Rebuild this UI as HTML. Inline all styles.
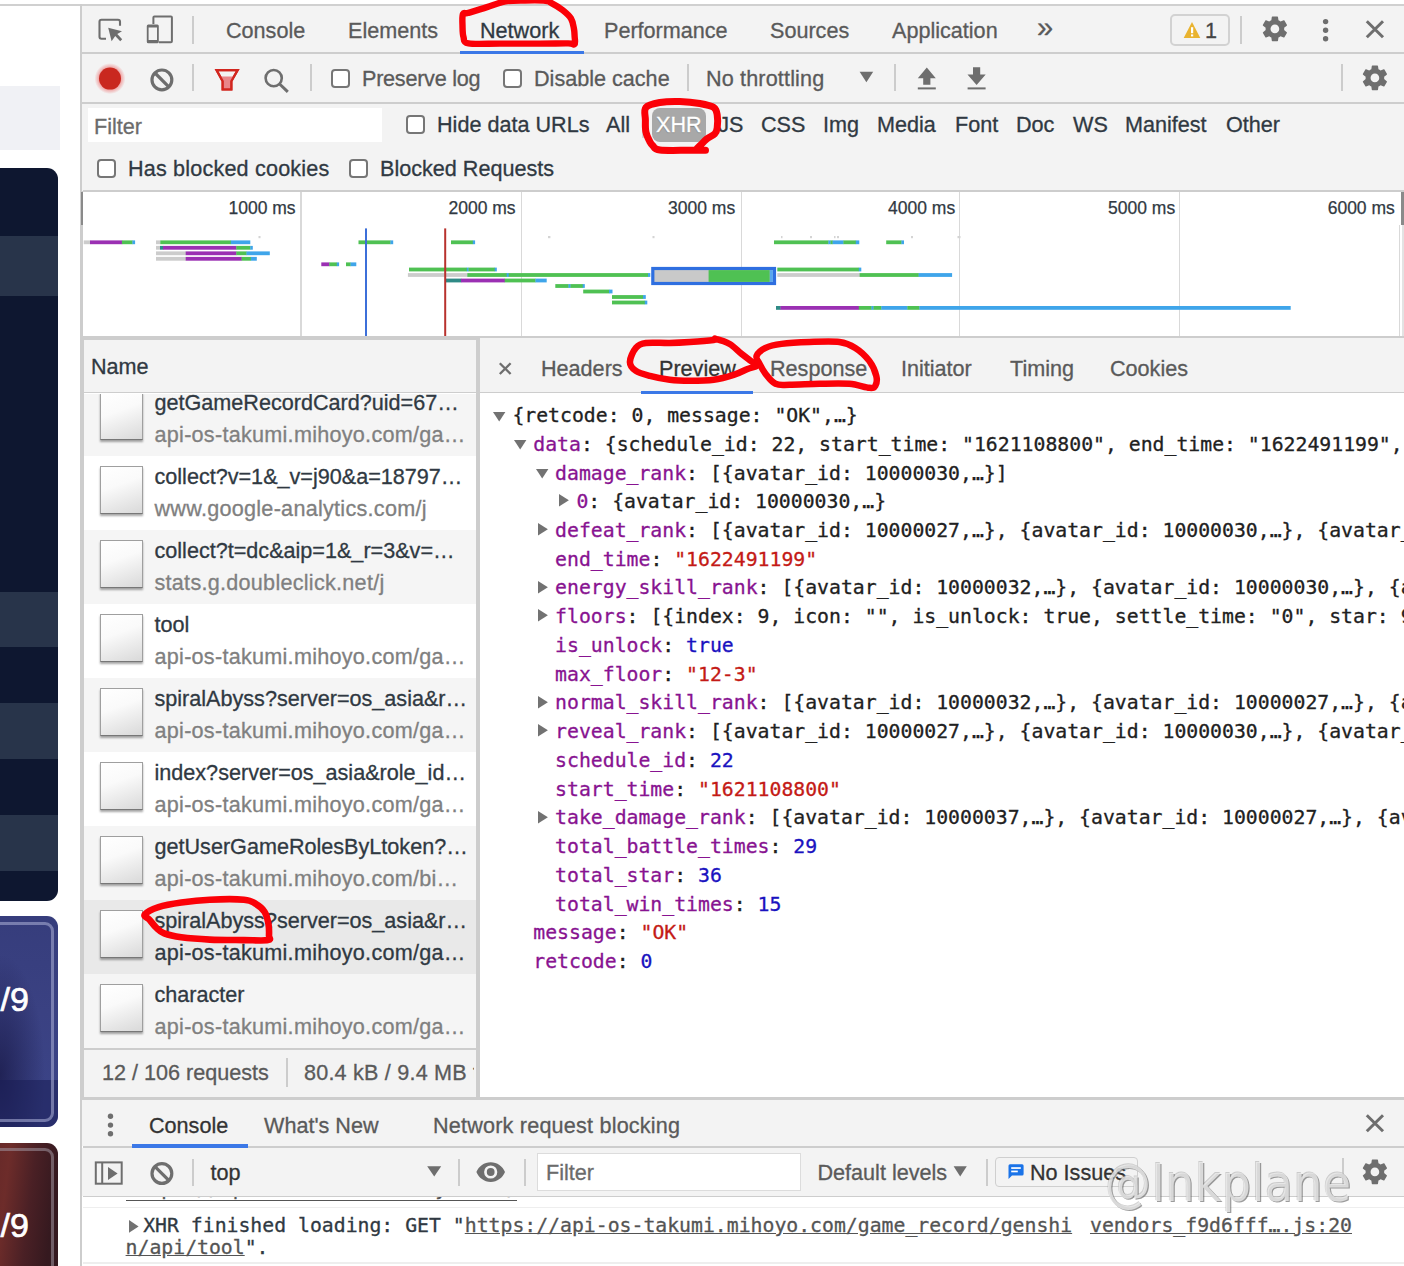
<!DOCTYPE html>
<html lang="en">
<head>
<meta charset="utf-8">
<title>DevTools - Network</title>
<style>
html,body{margin:0;padding:0;}
body{width:1404px;height:1266px;overflow:hidden;position:relative;background:#fff;
  font-family:"Liberation Sans",sans-serif;font-size:21.6px;color:#333;}
.abs{position:absolute;}
.t{position:absolute;white-space:nowrap;line-height:26px;-webkit-text-stroke:0.3px;}
.bar{position:absolute;background:#f3f3f3;}
.ln{position:absolute;background:#cdcdcd;}
.dv{position:absolute;width:2px;background:#ccc;}
.cb{position:absolute;width:15px;height:15px;border:2px solid #767676;border-radius:4px;background:#fff;}
.mono{font-family:"DejaVu Sans Mono","Liberation Mono",monospace;font-size:19.8px;}
svg{position:absolute;overflow:visible;}
.dark{color:#303942;}
.gray{color:#5a5a5a;}
/* tree */
.tr{position:absolute;white-space:pre;line-height:28px;height:28px;color:#212121;-webkit-text-stroke:0.3px;}
.k{color:#881391;}
.s{color:#c41a16;}
.n{color:#1a12c0;}
.ar{position:absolute;width:0;height:0;}
</style>
</head>
<body>

<!-- ============ LEFT PAGE STRIP ============ -->
<div id="page" class="abs" style="left:0;top:0;width:81px;height:1266px;background:#fff;overflow:hidden;">
  <div class="abs" style="left:0;top:86px;width:60px;height:63.5px;background:#f0f1f5;"></div>
  <div class="abs" style="left:-20px;top:168px;width:78px;height:733px;background:#0e1730;border-radius:11px;overflow:hidden;">
    <div class="abs" style="left:0;top:68px;width:100%;height:60px;background:#28344a;"></div>
    <div class="abs" style="left:0;top:424px;width:100%;height:55px;background:#28344a;"></div>
    <div class="abs" style="left:0;top:535px;width:100%;height:56px;background:#28344a;"></div>
    <div class="abs" style="left:0;top:647px;width:100%;height:56px;background:#28344a;"></div>
  </div>
  <div class="abs" style="left:-20px;top:916px;width:78px;height:211px;background:radial-gradient(ellipse 45px 120px at 20px 75%, rgba(24,24,70,.75), rgba(24,24,70,0) 100%),linear-gradient(180deg,#363d7c 0%,#3a4182 45%,#3b4488 100%);border-radius:11px;overflow:hidden;">
    <div class="abs" style="left:0;top:164px;width:100%;height:47px;background:rgba(25,30,85,.55);"></div>
    <div class="abs" style="left:-10px;top:5.5px;width:78px;height:194px;border:3.4px solid rgba(160,165,205,.62);border-radius:9px;"></div>
  </div>
  <div class="t" style="left:0.6px;top:981.6px;color:#fff;font-size:34px;line-height:34px;-webkit-text-stroke:0.7px;">/9</div>
  <div class="abs" style="left:-20px;top:1142.5px;width:78px;height:211px;background:linear-gradient(97deg,#5f2627 0%,#6d2c2a 30%,#4a2025 55%,#35191f 78%,#33191f 100%);border-radius:11px;overflow:hidden;">
    <div class="abs" style="left:-10px;top:5.5px;width:78px;height:194px;border:3.4px solid rgba(160,150,160,.55);border-radius:9px;"></div>
  </div>
  <div class="t" style="left:0.6px;top:1207.6px;color:#fff;font-size:34px;line-height:34px;-webkit-text-stroke:0.7px;">/9</div>
</div>

<!-- ============ DEVTOOLS FRAME ============ -->
<div class="ln" style="left:0;top:4px;width:1404px;height:2px;background:#d0d0d0;"></div>
<div class="ln" style="left:80.2px;top:4px;width:1.9px;height:1262px;background:#cdcdcd;"></div>
<div class="ln" style="left:82px;top:190px;width:1.2px;height:148px;background:#cdcdcd;"></div>
<div class="ln" style="left:80.4px;top:336px;width:3.6px;height:764px;background:#cdcdcd;"></div>

<!-- main tab bar -->
<div id="tb1" class="bar" style="left:82px;top:6px;width:1322px;height:46px;"></div>
<div class="ln" style="left:82px;top:52px;width:1322px;height:1.8px;"></div>
<!-- network toolbar -->
<div id="tb2" class="bar" style="left:82px;top:54px;width:1322px;height:48.2px;"></div>
<div class="ln" style="left:82px;top:102.2px;width:1322px;height:1.7px;"></div>
<!-- filter bar -->
<div id="tb3" class="bar" style="left:82px;top:103.9px;width:1322px;height:87px;"></div>

<!--TB1S-->
<!-- inspect icon -->
<svg style="left:84px;top:6px;" width="120" height="50" viewBox="84 6 120 50">
  <path d="M106 38.8 H101.5 Q99.5 38.8 99.5 36.8 V21.8 Q99.5 19.8 101.5 19.8 H118 Q120 19.8 120 21.8 V25.8" fill="none" stroke="#6e6e6e" stroke-width="2.1"/>
  <path d="M108.2 27.8 L122 31.2 L117.3 34.1 L122.2 39.2 L120.2 41.2 L115.2 36 L111.6 41.2 Z" fill="#6e6e6e"/>
  <!-- device icon -->
  <path d="M153.4 24 V17.4 Q153.4 16.4 154.4 16.4 H170.9 Q171.9 16.4 171.9 17.4 V41.2 Q171.9 42.2 170.9 42.2 H159" fill="none" stroke="#6e6e6e" stroke-width="2"/>
  <path d="M148.3 24.4 H157.3 Q158.8 24.4 158.8 25.9 V41.7 Q158.8 43.2 157.3 43.2 H148.3 Q146.8 43.2 146.8 41.7 V25.9 Q146.8 24.4 148.3 24.4 Z M148.6 27.6 V40 H157 V27.6 Z" fill="#6e6e6e" fill-rule="evenodd"/>
</svg>
<div class="dv" style="left:192px;top:16px;height:28px;"></div>
<div class="t gray" style="left:226px;top:18px;">Console</div>
<div class="t gray" style="left:348px;top:18px;">Elements</div>
<div class="t dark" style="left:480px;top:18px;">Network</div>
<div class="t gray" style="left:604px;top:18px;">Performance</div>
<div class="t gray" style="left:770px;top:18px;">Sources</div>
<div class="t gray" style="left:892px;top:18px;">Application</div>
<div class="t gray" style="left:1037px;top:13.5px;font-size:29px;">»</div>
<div class="abs" style="left:460px;top:50.6px;width:124px;height:3.2px;background:#3b78e7;"></div>
<!-- warning badge -->
<div class="abs" style="left:1170px;top:14px;width:56px;height:28px;border:2px solid #d2d2d2;border-radius:5px;"></div>
<svg style="left:1183px;top:21px;" width="18" height="18" viewBox="0 0 18 18"><path d="M9 1 L17.3 17 H0.7 Z" fill="#e9b32f"/><rect x="8" y="6.2" width="2.2" height="6" fill="#fff"/><rect x="8" y="13.4" width="2.2" height="2" fill="#fff"/></svg>
<div class="t" style="left:1205px;top:18px;color:#444;">1</div>
<div class="dv" style="left:1240px;top:16px;height:28px;"></div>
<svg style="left:1259.8px;top:14.3px;" width="29.8" height="29.8" viewBox="0 0 24 24"><path fill="#6e6e6e" d="M19.43 12.98c.04-.32.07-.64.07-.98s-.03-.66-.07-.98l2.11-1.65c.19-.15.24-.42.12-.64l-2-3.46c-.12-.22-.39-.3-.61-.22l-2.49 1c-.52-.4-1.08-.73-1.69-.98l-.38-2.65C14.46 2.18 14.25 2 14 2h-4c-.25 0-.46.18-.49.42l-.38 2.65c-.61.25-1.17.59-1.69.98l-2.49-1c-.23-.09-.49 0-.61.22l-2 3.46c-.13.22-.07.49.12.64l2.11 1.65c-.04.32-.07.65-.07.98s.03.66.07.98l-2.11 1.65c-.19.15-.24.42-.12.64l2 3.46c.12.22.39.3.61.22l2.49-1c.52.4 1.08.73 1.69.98l.38 2.65c.03.24.24.42.49.42h4c.25 0 .46-.18.49-.42l.38-2.65c.61-.25 1.17-.59 1.69-.98l2.49 1c.23.09.49 0 .61-.22l2-3.46c.12-.22.07-.49-.12-.64l-2.11-1.65zM12 15.5c-1.93 0-3.5-1.57-3.5-3.5s1.57-3.5 3.5-3.5 3.5 1.57 3.5 3.5-1.57 3.5-3.5 3.5z"/></svg>
<svg style="left:1320px;top:16px;" width="12" height="28" viewBox="0 0 12 28"><circle cx="5.6" cy="5.6" r="2.7" fill="#6e6e6e"/><circle cx="5.6" cy="14.3" r="2.7" fill="#6e6e6e"/><circle cx="5.6" cy="22.7" r="2.7" fill="#6e6e6e"/></svg>
<svg style="left:1364px;top:18px;" width="22" height="22" viewBox="1364 18 22 22"><path d="M1366.8 21.2 L1383 37.2 M1383 21.2 L1366.8 37.2" stroke="#6e6e6e" stroke-width="3" fill="none"/></svg>
<!--TB1E-->
<!--TB2S-->
<!-- record -->
<svg style="left:90px;top:58px;" width="40" height="40" viewBox="90 58 40 40"><defs><radialGradient id="rg" cx="50%" cy="50%" r="50%"><stop offset="70%" stop-color="#e88" stop-opacity="0.75"/><stop offset="100%" stop-color="#e88" stop-opacity="0"/></radialGradient></defs><circle cx="110" cy="78.6" r="15.5" fill="url(#rg)"/><circle cx="110" cy="78.6" r="11" fill="#c9281f"/></svg>
<!-- clear -->
<svg style="left:148px;top:65.9px;" width="28" height="28" viewBox="148 65 28 28"><circle cx="161.9" cy="78.9" r="9.9" fill="none" stroke="#6e6e6e" stroke-width="3.2"/><path d="M155 72 L168.8 85.8" stroke="#6e6e6e" stroke-width="3.2"/></svg>
<div class="dv" style="left:192px;top:64px;height:27px;"></div>
<!-- filter funnel -->
<svg style="left:212px;top:66px;" width="30" height="28" viewBox="212 66 30 28"><path d="M216.6 70.2 H237.6 L231.3 81.3 V89.3 H222.7 V81.3 Z" fill="none" stroke="#d2261f" stroke-width="2.3" stroke-linejoin="miter"/><path d="M220.2 76.4 H234 L231.3 81.3 V89.3 H222.7 V81.3 Z" fill="#e9868a"/><path d="M216.6 70.2 H237.6 L231.3 81.3 V89.3 H222.7 V81.3 Z" fill="none" stroke="#d2261f" stroke-width="2.3"/></svg>
<!-- search -->
<svg style="left:262px;top:65.9px;" width="30" height="30" viewBox="262 65 30 30"><circle cx="273.7" cy="77.1" r="8.1" fill="none" stroke="#6e6e6e" stroke-width="2.6"/><path d="M279.6 83 L287.8 90.8" stroke="#6e6e6e" stroke-width="3" /></svg>
<div class="dv" style="left:310px;top:64px;height:27px;"></div>
<div class="cb" style="left:331px;top:69px;"></div>
<div class="t gray" style="left:362px;top:65.9px;letter-spacing:-0.25px;">Preserve log</div>
<div class="cb" style="left:503px;top:69px;"></div>
<div class="t gray" style="left:534px;top:65.9px;">Disable cache</div>
<div class="dv" style="left:687px;top:64px;height:27px;"></div>
<div class="t gray" style="left:706px;top:65.9px;letter-spacing:0.15px;">No throttling</div>
<svg style="left:858px;top:70px;" width="16" height="14" viewBox="858 70 16 14"><path d="M859.6 71.8 H873.2 L866.4 82.2 Z" fill="#6e6e6e"/></svg>
<div class="dv" style="left:894px;top:64px;height:27px;"></div>
<!-- upload -->
<svg style="left:914px;top:64px;" width="26" height="28" viewBox="914 64 26 28"><path d="M926.8 67.6 L935.8 78.2 H930.4 V84.8 H923.2 V78.2 H917.8 Z" fill="#6e6e6e"/><rect x="917.8" y="87.4" width="18" height="2" fill="#6e6e6e"/></svg>
<!-- download -->
<svg style="left:964px;top:64px;" width="26" height="28" viewBox="964 64 26 28"><path d="M973 67.2 H980.2 V74.6 H985.7 L976.6 84.9 L967.5 74.6 H973 Z" fill="#6e6e6e"/><rect x="967.6" y="87.4" width="18" height="2" fill="#6e6e6e"/></svg>
<div class="dv" style="left:1341px;top:64px;height:27px;"></div>
<svg style="left:1359.8px;top:62.9px;" width="29.8" height="29.8" viewBox="0 0 24 24"><path fill="#6e6e6e" d="M19.43 12.98c.04-.32.07-.64.07-.98s-.03-.66-.07-.98l2.11-1.65c.19-.15.24-.42.12-.64l-2-3.46c-.12-.22-.39-.3-.61-.22l-2.49 1c-.52-.4-1.08-.73-1.69-.98l-.38-2.65C14.46 2.18 14.25 2 14 2h-4c-.25 0-.46.18-.49.42l-.38 2.65c-.61.25-1.17.59-1.69.98l-2.49-1c-.23-.09-.49 0-.61.22l-2 3.46c-.13.22-.07.49.12.64l2.11 1.65c-.04.32-.07.65-.07.98s.03.66.07.98l-2.11 1.65c-.19.15-.24.42-.12.64l2 3.46c.12.22.39.3.61.22l2.49-1c.52.4 1.08.73 1.69.98l.38 2.65c.03.24.24.42.49.42h4c.25 0 .46-.18.49-.42l.38-2.65c.61-.25 1.17-.59 1.69-.98l2.49 1c.23.09.49 0 .61-.22l2-3.46c.12-.22.07-.49-.12-.64l-2.11-1.65zM12 15.5c-1.93 0-3.5-1.57-3.5-3.5s1.57-3.5 3.5-3.5 3.5 1.57 3.5 3.5-1.57 3.5-3.5 3.5z"/></svg>
<!--TB2E-->
<!--TB3S-->
<div class="abs" style="left:88px;top:108px;width:294px;height:34px;background:#fff;"></div>
<div class="t" style="left:94px;top:114px;color:#6b6b6b;">Filter</div>
<div class="cb" style="left:406px;top:115px;"></div>
<div class="t dark" style="left:437px;top:112px;">Hide data URLs</div>
<div class="t dark" style="left:606px;top:112px;">All</div>
<div class="abs" style="left:642px;top:112px;width:2px;height:26px;background:#d6d6d6;"></div>
<div class="abs" style="left:652px;top:108px;width:54px;height:34px;background:#a8a8a8;border-radius:8px;"></div>
<div class="t" style="left:656px;top:112px;color:#fff;text-shadow:0 1px 1px rgba(0,0,0,.25);">XHR</div>
<div class="t dark" style="left:718.2px;top:112px;">JS</div>
<div class="t dark" style="left:761px;top:112px;">CSS</div>
<div class="t dark" style="left:823px;top:112px;">Img</div>
<div class="t dark" style="left:877px;top:112px;">Media</div>
<div class="t dark" style="left:955px;top:112px;">Font</div>
<div class="t dark" style="left:1016px;top:112px;">Doc</div>
<div class="t dark" style="left:1073px;top:112px;">WS</div>
<div class="t dark" style="left:1125px;top:112px;">Manifest</div>
<div class="t dark" style="left:1226px;top:112px;">Other</div>
<div class="cb" style="left:97px;top:158.5px;"></div>
<div class="t dark" style="left:128px;top:156px;letter-spacing:0.18px;">Has blocked cookies</div>
<div class="cb" style="left:349px;top:158.5px;"></div>
<div class="t dark" style="left:380px;top:156px;">Blocked Requests</div>
<!--TB3E-->
<!--OVS-->
<div class="abs" style="left:83px;top:190px;width:1321px;height:2px;background:#cdcdcd;"></div>
<div class="abs" style="left:83px;top:192px;width:1321px;height:144px;background:#fff;"></div>
<div class="abs" style="left:83px;top:336px;width:1321px;height:2.5px;background:#cdcdcd;"></div>
<svg style="left:0;top:0;" width="1404" height="346" viewBox="0 0 1404 346">
<g shape-rendering="crispEdges"><rect x="300" y="192" width="1.6" height="144" fill="#d9d9d9"/><rect x="520.6" y="192" width="1.6" height="144" fill="#d9d9d9"/><rect x="740.6" y="192" width="1.6" height="144" fill="#d9d9d9"/><rect x="958.6" y="192" width="1.6" height="144" fill="#d9d9d9"/><rect x="1178.6" y="192" width="1.6" height="144" fill="#d9d9d9"/>
<rect x="1398.6" y="225" width="1.6" height="111" fill="#d9d9d9"/>
<rect x="1402.4" y="225" width="1.6" height="111" fill="#e3e3e3"/>
<rect x="81" y="192" width="2.4" height="33" fill="#8a8a8a"/>
<rect x="1400.5" y="192" width="3.5" height="33" fill="#8a8a8a"/></g>
<rect x="258.5" y="236" width="2" height="2.2" fill="#d4d4d4"/><rect x="548" y="236" width="2.4" height="2.2" fill="#d4d4d4"/><rect x="652.5" y="236" width="2" height="2.2" fill="#d4d4d4"/><rect x="781" y="236" width="1.5" height="2.2" fill="#d4d4d4"/><rect x="810" y="236" width="2" height="2.2" fill="#d4d4d4"/><rect x="834" y="236" width="1.5" height="2.2" fill="#d4d4d4"/><rect x="837" y="236" width="2" height="2.2" fill="#d4d4d4"/><rect x="911" y="236" width="2" height="2.2" fill="#d4d4d4"/><rect x="957.5" y="236" width="3" height="2.2" fill="#d4d4d4"/>
<rect x="83.7" y="240.4" width="6.6" height="3.8" fill="#cccccc"/><rect x="90.0" y="240.4" width="32.2" height="3.8" fill="#9b30b3"/><rect x="121.9" y="240.4" width="10.8" height="3.8" fill="#4fc153"/><rect x="132.4" y="240.4" width="2.7" height="3.8" fill="#3fa5ea"/><rect x="156.0" y="240.4" width="4.6" height="3.8" fill="#cccccc"/><rect x="160.3" y="240.4" width="70.8" height="3.8" fill="#4fc153"/><rect x="230.8" y="240.4" width="19.5" height="3.8" fill="#3fa5ea"/><rect x="156.0" y="245.9" width="4.3" height="3.8" fill="#cccccc"/><rect x="160.0" y="245.9" width="3.3" height="3.8" fill="#2f8a86"/><rect x="163.0" y="245.9" width="73.6" height="3.8" fill="#9b30b3"/><rect x="236.3" y="245.9" width="14.3" height="3.8" fill="#4fc153"/><rect x="250.3" y="245.9" width="2.5" height="3.8" fill="#3fa5ea"/><rect x="156.0" y="251.4" width="30.0" height="3.8" fill="#cccccc"/><rect x="185.7" y="251.4" width="50.9" height="3.8" fill="#9b30b3"/><rect x="236.3" y="251.4" width="10.5" height="3.8" fill="#4fc153"/><rect x="246.5" y="251.4" width="23.3" height="3.8" fill="#3fa5ea"/><rect x="156.0" y="256.9" width="30.0" height="3.8" fill="#cccccc"/><rect x="185.7" y="256.9" width="56.2" height="3.8" fill="#9b30b3"/><rect x="241.6" y="256.9" width="9.5" height="3.8" fill="#4fc153"/><rect x="250.8" y="256.9" width="6.0" height="3.8" fill="#3fa5ea"/><rect x="358.5" y="240.4" width="32.2" height="3.8" fill="#4fc153"/><rect x="390.4" y="240.4" width="2.8" height="3.8" fill="#3fa5ea"/><rect x="321.3" y="262.4" width="8.3" height="3.8" fill="#9b30b3"/><rect x="329.3" y="262.4" width="7.8" height="3.8" fill="#4fc153"/><rect x="336.8" y="262.4" width="2.3" height="3.8" fill="#3fa5ea"/><rect x="346.0" y="262.4" width="4.8" height="3.8" fill="#4fc153"/><rect x="350.5" y="262.4" width="5.8" height="3.8" fill="#3fa5ea"/><rect x="451.0" y="240.4" width="22.1" height="3.8" fill="#4fc153"/><rect x="472.8" y="240.4" width="2.3" height="3.8" fill="#3fa5ea"/><rect x="409.0" y="267.6" width="58.1" height="3.8" fill="#4fc153"/><rect x="466.8" y="267.6" width="2.0" height="3.8" fill="#3fa5ea"/><rect x="468.5" y="267.6" width="26.5" height="3.8" fill="#4fc153"/><rect x="494.7" y="267.6" width="2.1" height="3.8" fill="#3fa5ea"/><rect x="407.9" y="273.1" width="59.7" height="3.8" fill="#cccccc"/><rect x="467.3" y="273.1" width="39.7" height="3.8" fill="#4fc153"/><rect x="506.7" y="273.1" width="2.3" height="3.8" fill="#3fa5ea"/><rect x="508.7" y="273.1" width="139.6" height="3.8" fill="#4fc153"/><rect x="648.0" y="273.1" width="2.3" height="3.8" fill="#3fa5ea"/><rect x="445.0" y="278.6" width="16.3" height="3.8" fill="#2f8a86"/><rect x="461.0" y="278.6" width="44.0" height="3.8" fill="#9b30b3"/><rect x="504.7" y="278.6" width="31.0" height="3.8" fill="#4fc153"/><rect x="535.4" y="278.6" width="11.3" height="3.8" fill="#3fa5ea"/><rect x="555.3" y="284.1" width="13.5" height="3.8" fill="#4fc153"/><rect x="568.5" y="284.1" width="2.3" height="3.8" fill="#3fa5ea"/><rect x="570.5" y="284.1" width="12.5" height="3.8" fill="#4fc153"/><rect x="582.7" y="284.1" width="2.1" height="3.8" fill="#3fa5ea"/><rect x="583.2" y="289.6" width="26.1" height="3.8" fill="#4fc153"/><rect x="609.0" y="289.6" width="3.5" height="3.8" fill="#3fa5ea"/><rect x="612.0" y="295.1" width="31.3" height="3.8" fill="#4fc153"/><rect x="643.0" y="295.1" width="2.8" height="3.8" fill="#3fa5ea"/><rect x="612.0" y="300.6" width="33.1" height="3.8" fill="#4fc153"/><rect x="644.8" y="300.6" width="2.5" height="3.8" fill="#3fa5ea"/><rect x="774.0" y="240.4" width="54.7" height="3.8" fill="#4fc153"/><rect x="828.4" y="240.4" width="2.4" height="3.8" fill="#3fa5ea"/><rect x="830.5" y="240.4" width="2.4" height="3.8" fill="#4fc153"/><rect x="832.6" y="240.4" width="11.1" height="3.8" fill="#3fa5ea"/><rect x="843.4" y="240.4" width="12.7" height="3.8" fill="#4fc153"/><rect x="855.8" y="240.4" width="3.5" height="3.8" fill="#3fa5ea"/><rect x="886.2" y="240.4" width="15.5" height="3.8" fill="#4fc153"/><rect x="901.4" y="240.4" width="2.6" height="3.8" fill="#3fa5ea"/><rect x="777.3" y="267.6" width="81.8" height="3.8" fill="#4fc153"/><rect x="858.8" y="267.6" width="2.5" height="3.8" fill="#3fa5ea"/><rect x="777.3" y="273.1" width="82.6" height="3.8" fill="#cccccc"/><rect x="859.6" y="273.1" width="59.3" height="3.8" fill="#4fc153"/><rect x="918.6" y="273.1" width="33.5" height="3.8" fill="#3fa5ea"/><rect x="776.0" y="306.0" width="4.8" height="3.8" fill="#2f8a86"/><rect x="780.5" y="306.0" width="78.6" height="3.8" fill="#9b30b3"/><rect x="858.8" y="306.0" width="13.0" height="3.8" fill="#4fc153"/><rect x="871.5" y="306.0" width="2.3" height="3.8" fill="#3fa5ea"/><rect x="873.5" y="306.0" width="8.1" height="3.8" fill="#4fc153"/><rect x="881.3" y="306.0" width="26.4" height="3.8" fill="#3fa5ea"/><rect x="907.4" y="306.0" width="12.3" height="3.8" fill="#4fc153"/><rect x="919.4" y="306.0" width="371.3" height="3.8" fill="#3fa5ea"/>
<rect x="365" y="228.4" width="2" height="107.6" fill="#3c6fd9"/>
<rect x="444.2" y="228.4" width="2" height="107.6" fill="#b8322e"/>
<rect x="652.8" y="268.5" width="121.7" height="15" fill="#c9c9c9" stroke="#2f6fe0" stroke-width="3.2"/>
<rect x="708.6" y="270.1" width="61.2" height="11.8" fill="#4fc153"/>
<rect x="769.8" y="270.1" width="3.1" height="11.8" fill="#58a6f0"/>
<text x="295.6" y="214.2" text-anchor="end" font-family="Liberation Sans, sans-serif" font-size="17.5" fill="#303942" stroke="#303942" stroke-width="0.25">1000 ms</text><text x="515.6" y="214.2" text-anchor="end" font-family="Liberation Sans, sans-serif" font-size="17.5" fill="#303942" stroke="#303942" stroke-width="0.25">2000 ms</text><text x="735.2" y="214.2" text-anchor="end" font-family="Liberation Sans, sans-serif" font-size="17.5" fill="#303942" stroke="#303942" stroke-width="0.25">3000 ms</text><text x="955.2" y="214.2" text-anchor="end" font-family="Liberation Sans, sans-serif" font-size="17.5" fill="#303942" stroke="#303942" stroke-width="0.25">4000 ms</text><text x="1175.2" y="214.2" text-anchor="end" font-family="Liberation Sans, sans-serif" font-size="17.5" fill="#303942" stroke="#303942" stroke-width="0.25">5000 ms</text><text x="1394.8" y="214.2" text-anchor="end" font-family="Liberation Sans, sans-serif" font-size="17.5" fill="#303942" stroke="#303942" stroke-width="0.25">6000 ms</text>
</svg>
<!--OVE-->
<!--LISTS-->
<style>
.ic{position:absolute;left:16px;top:10px;width:41px;height:46px;border:1px solid #9f9f9f;border-bottom-color:#777;
 background:linear-gradient(160deg,#fff 0%,#fafafa 40%,#d9d9d9 100%);box-shadow:0 1.5px 2px rgba(0,0,0,.35);}
</style>
<div class="abs" style="left:83px;top:338px;width:397px;height:2px;background:#cdcdcd;"></div>
<div class="bar" style="left:84px;top:340px;width:392px;height:52px;"></div>
<div class="t dark" style="left:91px;top:353.5px;">Name</div>
<div class="ln" style="left:84px;top:391.7px;width:392px;height:1.8px;"></div>
<div class="ln" style="left:476px;top:338px;width:4px;height:762px;"></div>
<div id="list" class="abs" style="left:84px;top:393.5px;width:392px;height:654.0px;overflow:hidden;background:#fff;">
<div class="abs" style="left:0;top:-12.0px;width:392px;height:74px;background:#f5f5f5;"><div class="ic"></div><div class="t dark" style="left:70.5px;top:8.4px;">getGameRecordCard?uid=67…</div><div class="t" style="left:70.5px;top:40.5px;color:#808080;letter-spacing:0.27px;">api-os-takumi.mihoyo.com/ga…</div></div>
<div class="abs" style="left:0;top:62.0px;width:392px;height:74px;background:#fff;"><div class="ic"></div><div class="t dark" style="left:70.5px;top:8.4px;">collect?v=1&amp;_v=j90&amp;a=18797…</div><div class="t" style="left:70.5px;top:40.5px;color:#808080;letter-spacing:0.27px;">www.google-analytics.com/j</div></div>
<div class="abs" style="left:0;top:136.0px;width:392px;height:74px;background:#f5f5f5;"><div class="ic"></div><div class="t dark" style="left:70.5px;top:8.4px;">collect?t=dc&amp;aip=1&amp;_r=3&amp;v=…</div><div class="t" style="left:70.5px;top:40.5px;color:#808080;letter-spacing:0.27px;">stats.g.doubleclick.net/j</div></div>
<div class="abs" style="left:0;top:210.0px;width:392px;height:74px;background:#fff;"><div class="ic"></div><div class="t dark" style="left:70.5px;top:8.4px;">tool</div><div class="t" style="left:70.5px;top:40.5px;color:#808080;letter-spacing:0.27px;">api-os-takumi.mihoyo.com/ga…</div></div>
<div class="abs" style="left:0;top:284.0px;width:392px;height:74px;background:#f5f5f5;"><div class="ic"></div><div class="t dark" style="left:70.5px;top:8.4px;">spiralAbyss?server=os_asia&amp;r…</div><div class="t" style="left:70.5px;top:40.5px;color:#808080;letter-spacing:0.27px;">api-os-takumi.mihoyo.com/ga…</div></div>
<div class="abs" style="left:0;top:358.0px;width:392px;height:74px;background:#fff;"><div class="ic"></div><div class="t dark" style="left:70.5px;top:8.4px;">index?server=os_asia&amp;role_id…</div><div class="t" style="left:70.5px;top:40.5px;color:#808080;letter-spacing:0.27px;">api-os-takumi.mihoyo.com/ga…</div></div>
<div class="abs" style="left:0;top:432.0px;width:392px;height:74px;background:#f5f5f5;"><div class="ic"></div><div class="t dark" style="left:70.5px;top:8.4px;">getUserGameRolesByLtoken?…</div><div class="t" style="left:70.5px;top:40.5px;color:#808080;letter-spacing:0.27px;">api-os-takumi.mihoyo.com/bi…</div></div>
<div class="abs" style="left:0;top:506.0px;width:392px;height:74px;background:#e9e9e9;"><div class="ic"></div><div class="t dark" style="left:70.5px;top:8.4px;">spiralAbyss?server=os_asia&amp;r…</div><div class="t" style="left:70.5px;top:40.5px;color:#303942;letter-spacing:0.27px;">api-os-takumi.mihoyo.com/ga…</div></div>
<div class="abs" style="left:0;top:580.0px;width:392px;height:74px;background:#f5f5f5;"><div class="ic"></div><div class="t dark" style="left:70.5px;top:8.4px;">character</div><div class="t" style="left:70.5px;top:40.5px;color:#808080;letter-spacing:0.27px;">api-os-takumi.mihoyo.com/ga…</div></div>
</div>
<div class="bar" style="left:84px;top:1047.5px;width:392px;height:49.5px;border-top:2px solid #cdcdcd;box-sizing:border-box;"></div>
<div class="t gray" style="left:102px;top:1060.3px;">12 / 106 requests</div>
<div class="dv" style="left:286px;top:1058px;height:29px;width:1.6px;"></div>
<div class="abs" style="left:304px;top:1060.3px;width:170.4px;height:30px;overflow:hidden;"><div class="t gray" style="left:0;top:0;letter-spacing:0.2px;">80.4 kB / 9.4 MB t</div></div>
<div class="ln" style="left:81px;top:1096.6px;width:1323px;height:3.6px;"></div>
<!--LISTE-->
<!--DETS-->
<div class="bar" style="left:480px;top:338px;width:924px;height:54px;"></div>
<div class="ln" style="left:480px;top:391.7px;width:924px;height:1.8px;"></div>
<svg style="left:497px;top:360px;" width="16" height="16" viewBox="497 360 16 16"><path d="M499.8 363.2 L510.6 374 M510.6 363.2 L499.8 374" stroke="#6e6e6e" stroke-width="2.3" fill="none"/></svg>
<div class="t gray" style="left:541px;top:356.3px;">Headers</div>
<div class="t" style="left:659px;top:356.3px;color:#333;">Preview</div>
<div class="t gray" style="left:770px;top:356.3px;">Response</div>
<div class="t gray" style="left:901px;top:356.3px;">Initiator</div>
<div class="t gray" style="left:1010px;top:356.3px;">Timing</div>
<div class="t gray" style="left:1110px;top:356.3px;">Cookies</div>
<div class="abs" style="left:641px;top:390.6px;width:112px;height:3px;background:#3b78e7;"></div>
<div id="detail" class="abs mono" style="left:480px;top:393.5px;width:924px;height:703px;background:#fff;overflow:hidden;">
<svg style="left:13.4px;top:18.0px" width="12.4" height="9.4" viewBox="0 0 12.4 9.4"><path d="M0 0H12.4L6.2 9.4Z" fill="#727272"/></svg>
<div class="tr" style="left:32.4px;top:8.55px;">{retcode: 0, message: "OK",…}</div>
<svg style="left:34.3px;top:46.7px" width="12.4" height="9.4" viewBox="0 0 12.4 9.4"><path d="M0 0H12.4L6.2 9.4Z" fill="#727272"/></svg>
<div class="tr" style="left:53.3px;top:37.29px;"><span class="k">data</span>: {schedule_id: 22, start_time: "1621108800", end_time: "1622491199", max_floor: "12-3",…}</div>
<svg style="left:56.1px;top:75.5px" width="12.4" height="9.4" viewBox="0 0 12.4 9.4"><path d="M0 0H12.4L6.2 9.4Z" fill="#727272"/></svg>
<div class="tr" style="left:75.1px;top:66.03px;"><span class="k">damage_rank</span>: [{avatar_id: 10000030,…}]</div>
<svg style="left:79.3px;top:100.9px" width="9.9" height="12.6" viewBox="0 0 9.9 12.6"><path d="M0 0V12.6L9.9 6.3Z" fill="#727272"/></svg>
<div class="tr" style="left:96.4px;top:94.77px;"><span class="k">0</span>: {avatar_id: 10000030,…}</div>
<svg style="left:58.0px;top:129.7px" width="9.9" height="12.6" viewBox="0 0 9.9 12.6"><path d="M0 0V12.6L9.9 6.3Z" fill="#727272"/></svg>
<div class="tr" style="left:75.1px;top:123.51px;"><span class="k">defeat_rank</span>: [{avatar_id: 10000027,…}, {avatar_id: 10000030,…}, {avatar_id: 10000032,…}]</div>
<div class="tr" style="left:75.1px;top:152.25px;"><span class="k">end_time</span>: <span class="s">"1622491199"</span></div>
<svg style="left:58.0px;top:187.1px" width="9.9" height="12.6" viewBox="0 0 9.9 12.6"><path d="M0 0V12.6L9.9 6.3Z" fill="#727272"/></svg>
<div class="tr" style="left:75.1px;top:180.99px;"><span class="k">energy_skill_rank</span>: [{avatar_id: 10000032,…}, {avatar_id: 10000030,…}, {avatar_id: 10000027,…}]</div>
<svg style="left:58.0px;top:215.9px" width="9.9" height="12.6" viewBox="0 0 9.9 12.6"><path d="M0 0V12.6L9.9 6.3Z" fill="#727272"/></svg>
<div class="tr" style="left:75.1px;top:209.73px;"><span class="k">floors</span>: [{index: 9, icon: "", is_unlock: true, settle_time: "0", star: 9, max_star: 9,…},…]</div>
<div class="tr" style="left:75.1px;top:238.47px;"><span class="k">is_unlock</span>: <span class="n">true</span></div>
<div class="tr" style="left:75.1px;top:267.21px;"><span class="k">max_floor</span>: <span class="s">"12-3"</span></div>
<svg style="left:58.0px;top:302.1px" width="9.9" height="12.6" viewBox="0 0 9.9 12.6"><path d="M0 0V12.6L9.9 6.3Z" fill="#727272"/></svg>
<div class="tr" style="left:75.1px;top:295.95px;"><span class="k">normal_skill_rank</span>: [{avatar_id: 10000032,…}, {avatar_id: 10000027,…}, {avatar_id: 10000030,…}]</div>
<svg style="left:58.0px;top:330.8px" width="9.9" height="12.6" viewBox="0 0 9.9 12.6"><path d="M0 0V12.6L9.9 6.3Z" fill="#727272"/></svg>
<div class="tr" style="left:75.1px;top:324.69px;"><span class="k">reveal_rank</span>: [{avatar_id: 10000027,…}, {avatar_id: 10000030,…}, {avatar_id: 10000032,…}]</div>
<div class="tr" style="left:75.1px;top:353.43px;"><span class="k">schedule_id</span>: <span class="n">22</span></div>
<div class="tr" style="left:75.1px;top:382.17px;"><span class="k">start_time</span>: <span class="s">"1621108800"</span></div>
<svg style="left:58.0px;top:417.1px" width="9.9" height="12.6" viewBox="0 0 9.9 12.6"><path d="M0 0V12.6L9.9 6.3Z" fill="#727272"/></svg>
<div class="tr" style="left:75.1px;top:410.91px;"><span class="k">take_damage_rank</span>: [{avatar_id: 10000037,…}, {avatar_id: 10000027,…}, {avatar_id: 10000030,…}]</div>
<div class="tr" style="left:75.1px;top:439.65px;"><span class="k">total_battle_times</span>: <span class="n">29</span></div>
<div class="tr" style="left:75.1px;top:468.39px;"><span class="k">total_star</span>: <span class="n">36</span></div>
<div class="tr" style="left:75.1px;top:497.13px;"><span class="k">total_win_times</span>: <span class="n">15</span></div>
<div class="tr" style="left:53.3px;top:525.87px;"><span class="k">message</span>: <span class="s">"OK"</span></div>
<div class="tr" style="left:53.3px;top:554.61px;"><span class="k">retcode</span>: <span class="n">0</span></div>
</div>
<!--DETE-->
<!--DRS-->
<div class="bar" style="left:82px;top:1100.2px;width:1322px;height:46px;"></div>
<div class="ln" style="left:83px;top:1146px;width:1321px;height:1.6px;"></div>
<svg style="left:104px;top:1110px;" width="12" height="30" viewBox="0 0 12 30"><circle cx="6.5" cy="6.2" r="2.7" fill="#6e6e6e"/><circle cx="6.5" cy="15.1" r="2.7" fill="#6e6e6e"/><circle cx="6.5" cy="23.8" r="2.7" fill="#6e6e6e"/></svg>
<div class="t" style="left:149px;top:1112.5px;color:#333;">Console</div>
<div class="t gray" style="left:264px;top:1112.5px;">What's New</div>
<div class="t gray" style="left:433px;top:1112.5px;letter-spacing:0.2px;">Network request blocking</div>
<div class="abs" style="left:132px;top:1144px;width:116px;height:3.6px;background:#3b78e7;"></div>
<svg style="left:1364px;top:1112px;" width="22" height="22" viewBox="1364 1112 22 22"><path d="M1366.8 1115.2 L1383 1131.2 M1383 1115.2 L1366.8 1131.2" stroke="#6e6e6e" stroke-width="3" fill="none"/></svg>
<!-- console toolbar -->
<div class="bar" style="left:82px;top:1147.6px;width:1322px;height:48.8px;"></div>
<div class="ln" style="left:83px;top:1196.4px;width:1321px;height:1.4px;"></div>
<svg style="left:92px;top:1158px;" width="34" height="30" viewBox="92 1158 34 30"><rect x="95.8" y="1162.4" width="25.9" height="21.3" fill="none" stroke="#6e6e6e" stroke-width="2"/><path d="M102.2 1162.4 V1183.7" stroke="#6e6e6e" stroke-width="2"/><path d="M108 1167 V1180 L117.6 1173.5 Z" fill="#6e6e6e"/></svg>
<svg style="left:148px;top:1160px;" width="28" height="28" viewBox="148 1160 28 28"><circle cx="161.9" cy="1173.5" r="9.9" fill="none" stroke="#6e6e6e" stroke-width="3.2"/><path d="M155 1166.6 L168.8 1180.4" stroke="#6e6e6e" stroke-width="3.2"/></svg>
<div class="dv" style="left:192px;top:1158.5px;height:27px;"></div>
<div class="t" style="left:210.5px;top:1159.7px;color:#333;">top</div>
<svg style="left:426px;top:1165px;" width="16" height="14" viewBox="426 1165 16 14"><path d="M427.2 1166.2 H441.2 L434.2 1176.4 Z" fill="#6e6e6e"/></svg>
<div class="dv" style="left:458px;top:1158.5px;height:27px;"></div>
<svg style="left:474px;top:1158px;" width="34" height="28" viewBox="474 1158 34 28"><path d="M490.7 1162.2 C484.2 1162.2 478.7 1166.2 476.4 1172 C478.7 1177.8 484.2 1181.9 490.7 1181.9 C497.2 1181.9 502.7 1177.8 505 1172 C502.7 1166.2 497.2 1162.2 490.7 1162.2 Z M490.7 1178.6 A6.6 6.6 0 1 1 490.7 1165.4 A6.6 6.6 0 1 1 490.7 1178.6 Z M490.7 1168.1 A3.9 3.9 0 1 0 490.7 1175.9 A3.9 3.9 0 1 0 490.7 1168.1 Z" fill="#6e6e6e" fill-rule="evenodd"/></svg>
<div class="dv" style="left:524px;top:1158.5px;height:27px;"></div>
<div class="abs" style="left:536.5px;top:1152.5px;width:262px;height:36px;background:#fff;border:1.5px solid #dcdcdc;"></div>
<div class="t" style="left:546px;top:1159.7px;color:#6b6b6b;">Filter</div>
<div class="t gray" style="left:817.5px;top:1159.7px;">Default levels</div>
<svg style="left:952px;top:1165px;" width="16" height="14" viewBox="952 1165 16 14"><path d="M953.6 1166.2 H966.8 L960.2 1176.4 Z" fill="#6e6e6e"/></svg>
<div class="dv" style="left:985.6px;top:1158.5px;height:27px;"></div>
<div class="abs" style="left:994.5px;top:1156.5px;width:141px;height:28px;border:1.6px solid #cfcfcf;border-radius:4px;"></div>
<svg style="left:1008px;top:1163px;" width="17" height="17" viewBox="1008 1163 17 17"><path d="M1010 1164.2 H1022.1 Q1023.6 1164.2 1023.6 1165.7 V1174 Q1023.6 1175.5 1022.1 1175.5 H1012 L1008.5 1179 V1165.7 Q1008.5 1164.2 1010 1164.2 Z" fill="#1a73e8"/><rect x="1011.2" y="1167.2" width="9.6" height="1.7" fill="#fff"/><rect x="1011.2" y="1170.6" width="6.6" height="1.7" fill="#fff"/></svg>
<div class="t" style="left:1030px;top:1159.7px;color:#333;">No Issues</div>
<div class="dv" style="left:1342px;top:1158px;height:27px;width:1.6px;"></div>
<svg style="left:1360px;top:1157px;" width="29.8" height="29.8" viewBox="0 0 24 24"><path fill="#6e6e6e" d="M19.43 12.98c.04-.32.07-.64.07-.98s-.03-.66-.07-.98l2.11-1.65c.19-.15.24-.42.12-.64l-2-3.46c-.12-.22-.39-.3-.61-.22l-2.49 1c-.52-.4-1.08-.73-1.69-.98l-.38-2.65C14.46 2.18 14.25 2 14 2h-4c-.25 0-.46.18-.49.42l-.38 2.65c-.61.25-1.17.59-1.69.98l-2.49-1c-.23-.09-.49 0-.61.22l-2 3.46c-.13.22-.07.49.12.64l2.11 1.65c-.04.32-.07.65-.07.98s.03.66.07.98l-2.11 1.65c-.19.15-.24.42-.12.64l2 3.46c.12.22.39.3.61.22l2.49-1c.52.4 1.08.73 1.69.98l.38 2.65c.03.24.24.42.49.42h4c.25 0 .46-.18.49-.42l.38-2.65c.61-.25 1.17-.59 1.69-.98l2.49 1c.23.09.49 0 .61-.22l2-3.46c.12-.22.07-.49-.12-.64l-2.11-1.65zM12 15.5c-1.93 0-3.5-1.57-3.5-3.5s1.57-3.5 3.5-3.5 3.5 1.57 3.5 3.5-1.57 3.5-3.5 3.5z"/></svg>
<!-- console messages -->
<div id="cons" class="abs mono" style="-webkit-text-stroke:0.3px;left:83px;top:1197.4px;width:1321px;height:68.6px;background:#fff;overflow:hidden;color:#303942;">
  <div class="abs" style="left:42.6px;top:-19.6px;white-space:pre;line-height:21.6px;color:#545454;">https://api-os-takumi.mihoyo.com/</div>
  <div class="abs" style="left:42.6px;top:2.4px;width:391.4px;height:1.7px;background:#555;"></div>
  <div class="abs" style="left:0;top:9.2px;width:1321px;height:1.4px;background:#eee;"></div>
  <svg style="left:46px;top:22.4px;" width="9.6" height="12.8" viewBox="0 0 9.6 12.8"><path d="M0 0V12.8L9.6 6.4Z" fill="#727272"/></svg>
  <div class="abs" style="left:60.2px;top:17.6px;white-space:pre;line-height:21.6px;">XHR finished loading: GET "<u style="color:#545454">https://api-os-takumi.mihoyo.com/game_record/genshi</u></div>
  <div class="abs" style="left:42.6px;top:39.5px;white-space:pre;line-height:21.6px;"><u style="color:#545454">n/api/tool</u>".</div>
  <div class="abs" style="right:52px;top:17.6px;white-space:pre;line-height:21.6px;color:#545454;"><u>vendors_f9d6fff….js:20</u></div>
  <div class="abs" style="left:0;top:65px;width:1321px;height:1.4px;background:#eee;"></div>
</div>
<!-- watermark -->
<div class="abs" style="left:1105px;top:1152px;font-family:'DejaVu Sans',sans-serif;font-stretch:condensed;font-size:51px;line-height:64px;letter-spacing:0.45px;color:rgba(236,236,236,.8);text-shadow:1.2px 1.2px 0.6px rgba(95,95,95,.62), -0.6px -0.6px 0.5px rgba(130,130,130,.35);white-space:nowrap;">@Inkplane</div>
<!--DRE-->
<!--ANS-->
<svg style="left:0;top:0;" width="1404" height="1266" viewBox="0 0 1404 1266" fill="none" stroke="#fb0007" stroke-linejoin="round" stroke-linecap="round">
<path d="M463.0 14.0 C462.0 16.1 462.4 21.8 462.5 25.6 C462.6 29.4 462.5 34.0 463.5 37.0 C464.5 40.0 462.4 42.3 468.5 43.4 C474.6 44.5 488.1 43.6 500.0 43.6 C511.9 43.6 528.6 43.6 540.0 43.6 C551.4 43.6 562.4 43.3 568.2 43.4 C574.0 43.5 573.5 45.4 574.6 44.2 C575.7 43.0 574.7 38.6 574.6 36.0 C574.5 33.4 574.5 31.4 573.9 28.5 C573.3 25.6 572.9 21.6 571.0 18.5 C569.1 15.4 565.8 12.6 562.5 10.0 C559.2 7.4 553.9 4.3 551.0 2.8 C548.1 1.2 549.7 1.1 545.4 0.7 C541.1 0.3 531.6 0.4 525.0 0.5 C518.4 0.6 511.8 0.3 505.5 1.4 C499.2 2.5 493.2 5.2 487.0 7.1 C480.8 9.0 472.5 11.7 468.5 12.8 C464.5 14.0 464.0 11.9 463.0 14.0Z" stroke-width="6.4"/>
<path d="M705.5 150.3 C702.9 150.3 697.6 150.4 690.0 150.3 C682.4 150.2 666.1 150.8 659.9 150.0 C653.7 149.2 654.6 147.2 652.9 145.8 C651.2 144.4 651.1 144.1 649.9 141.8 C648.7 139.5 646.6 135.6 645.9 131.9 C645.1 128.2 645.4 124.0 645.4 119.9 C645.4 115.8 643.5 110.3 645.9 107.4 C648.3 104.5 654.2 103.5 659.9 102.5 C665.5 101.5 673.1 101.3 679.8 101.5 C686.4 101.7 694.1 102.5 699.8 103.5 C705.4 104.5 710.8 105.5 713.7 107.4 C716.6 109.3 716.6 111.5 717.2 114.9 C717.8 118.3 717.6 124.7 717.2 127.9 C716.8 131.1 716.5 132.1 714.7 133.9 C713.0 135.7 709.2 136.9 706.7 138.9 C704.2 140.9 701.4 144.2 699.8 145.8 C698.2 147.4 697.5 148.1 697.0 148.5" stroke-width="7"/>
<path d="M629.9 361.9 C629.9 358.1 633.2 351.0 635.9 347.9 C638.6 344.8 640.2 343.8 645.9 343.0 C651.5 342.2 662.5 343.2 669.8 343.0 C677.1 342.8 682.5 342.5 689.8 342.0 C697.1 341.5 709.4 340.5 713.7 340.0 C718.0 339.5 713.0 338.1 715.7 338.8 C718.4 339.5 725.4 341.5 729.7 344.0 C734.0 346.5 737.6 350.8 741.6 353.9 C745.6 357.0 751.1 360.9 753.6 362.9 C756.1 364.9 757.6 364.9 756.6 365.9 C755.6 366.9 751.4 367.4 747.6 368.9 C743.8 370.4 739.4 373.1 733.7 374.9 C728.1 376.7 721.0 378.8 713.7 379.8 C706.4 380.8 697.1 380.8 689.8 380.8 C682.5 380.8 676.4 380.6 669.8 379.8 C663.1 379.0 655.5 377.4 649.9 375.9 C644.2 374.4 639.2 373.2 635.9 370.9 C632.6 368.6 629.9 365.7 629.9 361.9Z" stroke-width="6.5"/>
<path d="M756.6 355.9 C757.6 353.2 761.5 349.9 765.6 347.9 C769.8 345.9 774.2 344.9 781.5 343.9 C788.8 342.9 799.8 342.3 809.4 342.0 C819.0 341.7 831.8 341.0 839.4 342.0 C847.0 343.0 850.3 344.8 855.3 347.9 C860.3 351.0 865.8 356.2 869.3 360.9 C872.8 365.6 875.3 371.8 876.3 375.9 C877.3 380.0 876.5 383.8 875.3 385.8 C874.1 387.8 873.6 388.1 869.3 387.8 C865.0 387.5 857.6 384.5 849.3 383.8 C841.0 383.1 829.4 383.6 819.4 383.8 C809.4 384.0 796.8 384.8 789.5 384.8 C782.2 384.8 779.5 385.6 775.5 383.8 C771.5 382.0 768.2 377.2 765.6 373.9 C763.0 370.6 761.1 366.9 759.6 363.9 C758.1 360.9 755.6 358.6 756.6 355.9Z" stroke-width="6.5"/>
<path d="M144.8 914.5 C146.3 912.4 152.4 909.1 158.5 907.1 C164.6 905.1 172.8 903.7 181.3 902.5 C189.9 901.3 199.4 900.2 209.8 899.7 C220.2 899.2 236.4 899.0 244.0 899.7 C251.6 900.4 252.0 901.7 255.4 903.7 C258.8 905.7 262.3 908.3 264.5 911.7 C266.7 915.1 267.8 920.2 268.5 924.2 C269.2 928.2 269.1 933.0 269.0 935.6 C268.9 938.2 272.1 939.4 267.9 940.1 C263.7 940.9 253.7 940.2 244.0 940.1 C234.3 940.0 220.2 940.1 209.8 939.6 C199.4 939.1 188.9 938.3 181.3 937.3 C173.7 936.2 168.4 934.9 164.2 933.3 C160.0 931.7 158.7 929.9 156.2 927.6 C153.7 925.3 151.3 921.8 149.4 919.6 C147.5 917.4 143.3 916.6 144.8 914.5Z" stroke-width="6.6"/>
</svg>
<!--ANE-->

</body>
</html>
